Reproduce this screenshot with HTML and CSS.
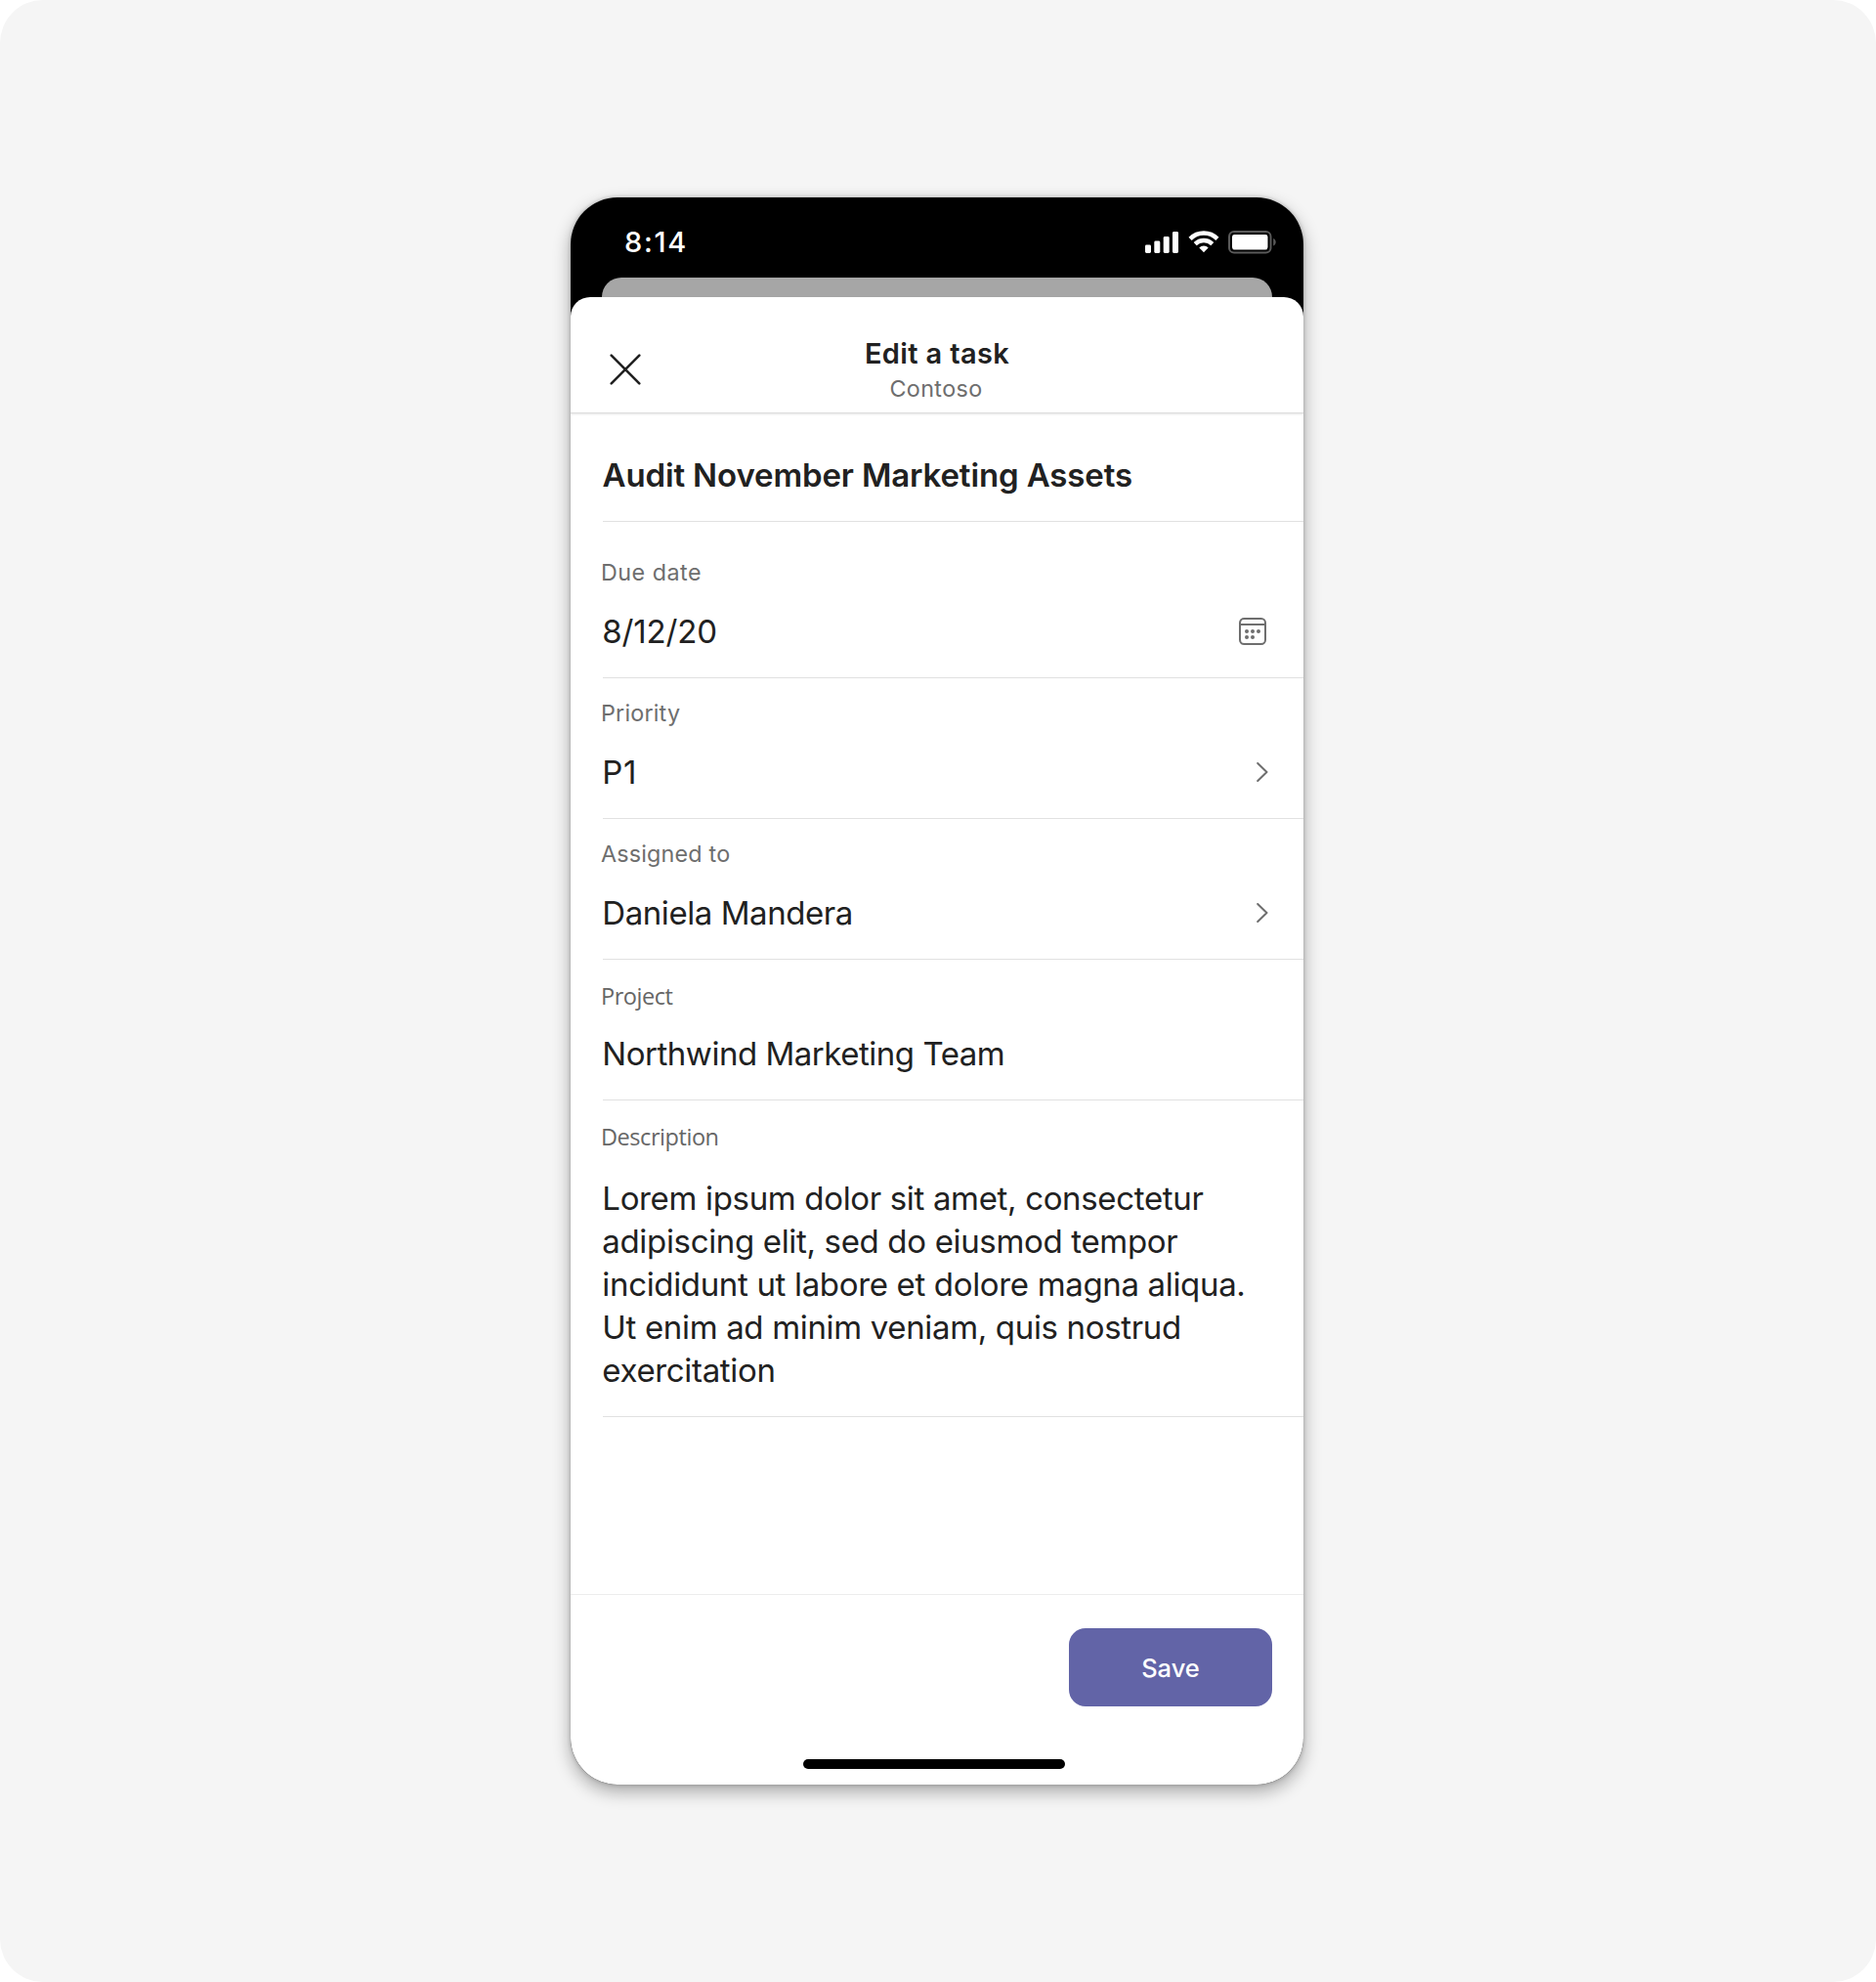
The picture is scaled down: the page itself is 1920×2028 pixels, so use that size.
FILE: index.html
```html
<!DOCTYPE html>
<html lang="en">
<head>
<meta charset="utf-8">
<title>Edit a task</title>
<link rel="stylesheet" href="styles.css">
</head>
<body>
<div class="canvas">
  <main class="phone">
    <div class="status">
      <span class="time">8:14</span>
      <div class="indicators">
        <svg width="35" height="22" viewBox="0 0 35 22" fill="#fff"><rect x="0" y="13.5" width="6" height="8.5" rx="1.4"/><rect x="9.3" y="9.5" width="6" height="12.5" rx="1.4"/><rect x="18.7" y="5" width="6" height="17" rx="1.4"/><rect x="28" y="0" width="6" height="22" rx="1.4"/></svg>
        <svg width="32" height="23" viewBox="0 0 32 23" fill="none" stroke="#fff"><path d="M2.1 8.3a19.6 19.6 0 0 1 27.8 0" stroke-width="4.5"/><path d="M7.2 13.6a12.5 12.5 0 0 1 17.6 0" stroke-width="4.3"/><path d="M16 22.2l-4.7-4.8a6.8 6.8 0 0 1 9.4 0z" fill="#fff" stroke="none"/></svg>
        <svg width="50" height="24" viewBox="0 0 50 24"><rect x="1" y="1" width="42.5" height="21.5" rx="5" fill="none" stroke="#5a5a5a" stroke-width="2"/><rect x="4" y="4" width="36.5" height="15.5" rx="2.4" fill="#fff"/><path d="M46.2 8c1.5.6 2.5 2 2.5 3.8s-1 3.2-2.5 3.8z" fill="#5a5a5a"/></svg>
      </div>
    </div>
    <div class="backdrop"></div>
    <section class="sheet">
      <header class="header">
        <svg class="close" width="32" height="32" viewBox="0 0 32 32" fill="none" stroke="#212121" stroke-width="2.6" stroke-linecap="round"><path d="M1.7 1.7l28.6 28.6M30.3 1.7l-28.6 28.6"/></svg>
        <div class="heading">
          <h1 class="title">Edit a task</h1>
          <p class="subtitle">Contoso</p>
        </div>
      </header>
      <div class="form">
        <h2 class="task">Audit November Marketing Assets</h2>
        <div class="field first">
          <div class="label due">Due date</div>
          <div class="row"><span class="value date">8/12/20</span>
            <svg class="calendar" width="28" height="28" viewBox="0 0 28 28" fill="none" stroke="#6e6e6e" stroke-width="2"><rect x="1" y="1" width="26" height="26" rx="4.2"/><path d="M1 7h26"/><g fill="#6e6e6e" stroke="none"><circle cx="8" cy="14" r="2"/><circle cx="14" cy="14" r="2"/><circle cx="20" cy="14" r="2"/><circle cx="8" cy="20" r="2"/><circle cx="14" cy="20" r="2"/></g></svg>
          </div>
        </div>
        <div class="field">
          <div class="label">Priority</div>
          <div class="row"><span class="value priority">P1</span>
            <svg class="chevron" width="12" height="20" viewBox="0 0 12 20" fill="none" stroke="#6e6e6e" stroke-width="2" stroke-linecap="round" stroke-linejoin="round"><path d="M1.2 1l9.3 9-9.3 9"/></svg>
          </div>
        </div>
        <div class="field">
          <div class="label">Assigned to</div>
          <div class="row"><span class="value name">Daniela Mandera</span>
            <svg class="chevron" width="12" height="20" viewBox="0 0 12 20" fill="none" stroke="#6e6e6e" stroke-width="2" stroke-linecap="round" stroke-linejoin="round"><path d="M1.2 1l9.3 9-9.3 9"/></svg>
          </div>
        </div>
        <div class="field plain">
          <div class="label">Project</div>
          <div class="row"><span class="value team">Northwind Marketing Team</span></div>
        </div>
        <div class="field plain description">
          <div class="label">Description</div>
          <p class="value">Lorem ipsum dolor sit amet, consectetur<br>adipiscing elit, sed do eiusmod tempor<br>incididunt ut labore et dolore magna aliqua.<br>Ut enim ad minim veniam, quis nostrud<br>exercitation</p>
        </div>
      </div>
      <footer class="footer">
        <button class="save" type="button">Save</button>
        <div class="home"></div>
      </footer>
    </section>
  </main>
</div>
</body>
</html>
```
FILE: styles.css
```css
* {
  box-sizing: border-box;
}

body {
  margin: 0;
  background: #fff;
  font-family: Inter, "Liberation Sans", sans-serif;
  color: #212121;
}

h1, h2, p {
  margin: 0;
}

svg {
  display: block;
  flex: none;
}

.canvas {
  height: 2028px;
  padding: 202px 0 0 584px;
  background: #f5f5f5;
  border-radius: 44px;
}

.phone {
  display: flex;
  flex-direction: column;
  width: 750px;
  height: 1624px;
  overflow: hidden;
  background: #000;
  border-radius: 48px;
  box-shadow: 0 7px 18px rgba(0, 0, 0, .32), 0 0 4px rgba(0, 0, 0, .22);
}

.status {
  display: flex;
  justify-content: space-between;
  height: 82px;
  padding: 34px 27px 0 55px;
}

.time {
  height: 24px;
  font-size: 29px;
  font-weight: 550;
  line-height: 24px;
  letter-spacing: 1.7px;
  color: #fff;
}

.indicators {
  display: flex;
  gap: 9px;
}

.indicators svg:first-child {
  margin-top: 1px;
}

.backdrop {
  height: 20px;
  margin: 0 32px;
  background: #a6a6a6;
  border-radius: 20px 20px 0 0;
}

.sheet {
  display: flex;
  flex: 1;
  flex-direction: column;
  background: #fff;
  border-radius: 20px 20px 0 0;
}

.header {
  display: grid;
  grid-template-columns: 1fr auto 1fr;
  height: 119px;
  padding: 40px 40px 0;
  border-bottom: 1px solid #dcdcdc;
  box-shadow: 0 1px 2px rgba(0, 0, 0, .1);
}

.close {
  margin-top: 18px;
}

.heading {
  text-align: center;
}

.title {
  font-size: 29px;
  font-weight: 600;
  line-height: 36px;
  letter-spacing: .35px;
}

.subtitle {
  margin-top: 3px;
  padding-right: 2px;
  font-size: 23.3px;
  line-height: 29px;
  letter-spacing: .4px;
  color: #6e6e6e;
}

.form {
  flex: 1;
  padding-left: 33px;
}

.task {
  height: 111px;
  padding-top: 41px;
  border-bottom: 1px solid #e1e1e1;
  font-size: 33px;
  font-weight: 600;
  line-height: 44px;
  letter-spacing: -.132px;
  text-indent: -.5px;
}

.field {
  height: 144px;
  padding-top: 21px;
  border-bottom: 1px solid #e1e1e1;
}

.field.first {
  height: 160px;
  padding-top: 37px;
}

.label {
  margin: 0 0 24px -2px;
  font-size: 23.3px;
  line-height: 29px;
  letter-spacing: .2px;
  color: #6e6e6e;
}

.label.due {
  letter-spacing: .5px;
}

.row {
  display: flex;
  align-items: center;
  justify-content: space-between;
  padding-right: 36px;
}

.value {
  margin-left: -.7px;
  font-size: 33px;
  line-height: 44px;
  letter-spacing: -.338px;
}

.value.date {
  letter-spacing: -.145px;
}

.value.priority {
  letter-spacing: .5px;
}

.value.name {
  letter-spacing: -.435px;
}

.value.team {
  letter-spacing: -.473px;
}

.calendar {
  margin-right: 2px;
}

.field.plain {
  padding-top: 23px;
}

.plain .label {
  margin-bottom: 22px;
  font-family: "Open Sans", "Noto Sans", sans-serif;
  font-size: 23.5px;
  letter-spacing: -.45px;
  color: #666;
}

.field.description {
  height: 324px;
}

.description .label {
  margin-bottom: 26px;
}

.footer {
  display: flex;
  flex-direction: column;
  height: 195px;
  padding: 34px 32px 0;
  border-top: 1px solid #ededed;
}

.save {
  align-self: flex-end;
  width: 208px;
  height: 80px;
  padding: 1px 0 0;
  border: 0;
  border-radius: 17px;
  background: #6264a7;
  font: 500 25.5px/30px Inter, "Liberation Sans", sans-serif;
  color: #fff;
}

.home {
  width: 268px;
  height: 10px;
  margin: 54px 0 0 206px;
  background: #000;
  border-radius: 5px;
}
```
